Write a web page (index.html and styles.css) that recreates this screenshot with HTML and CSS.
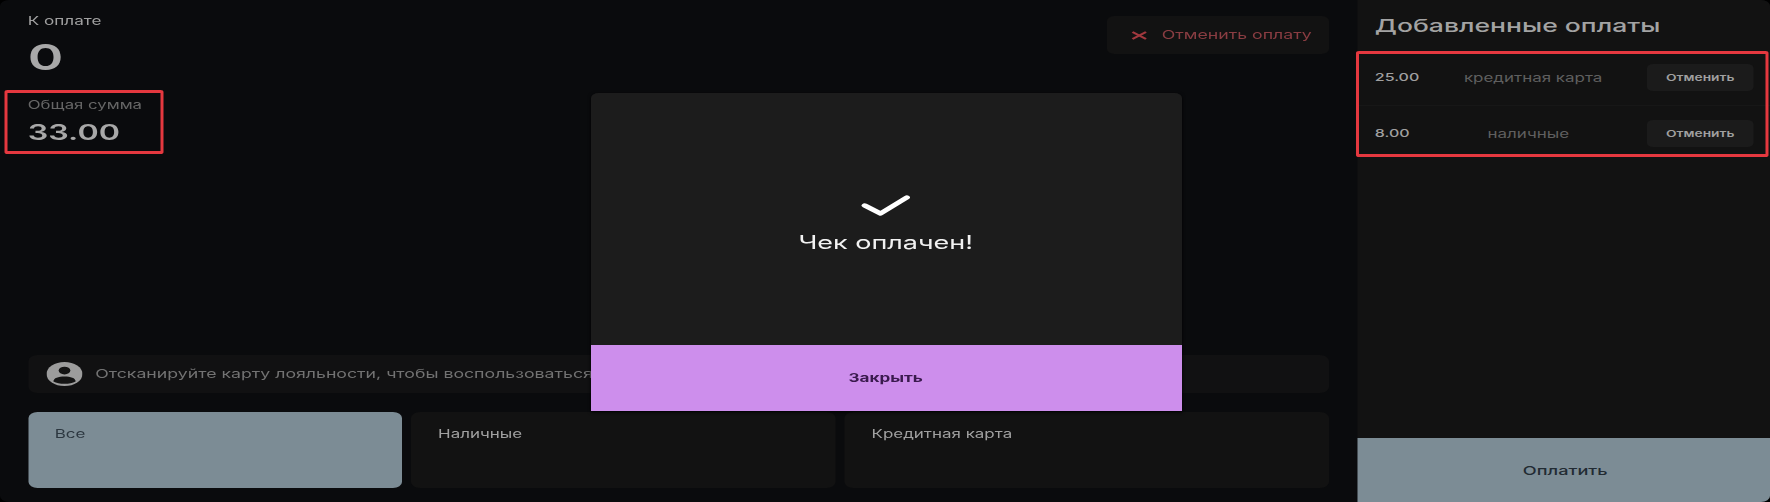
FILE: index.html
```html
<!DOCTYPE html>
<html lang="ru">
<head>
<meta charset="utf-8">
<title>Оплата</title>
<link rel="stylesheet" href="styles.css">
</head>
<body>
<div class="app">
  <main class="main">
    <header class="top">
      <div class="sums">
        <div class="label label-due">К оплате</div>
        <div class="due">0</div>
        <div class="total marked">
          <div class="label label-total">Общая сумма</div>
          <div class="total-value">33.00</div>
        </div>
      </div>
      <button class="cancel-all">
        <svg class="cancel-icon" viewBox="0 0 11 9" preserveAspectRatio="none"><path d="M1 1l9 7M10 1L1 8"/></svg>
        <span>Отменить оплату</span>
      </button>
    </header>
    <div class="loyalty">
      <svg class="avatar" viewBox="0 0 24 24"><circle class="avatar-bg" cx="12" cy="12" r="12"/><circle class="avatar-fg" cx="12" cy="8.6" r="3.9"/><path class="avatar-fg" d="M4.6 19.4c0-3.600 3.400-5 7.400-5s7.400 1.400 7.400 5c-1.900 1.500-4.500 2.400-7.400 2.400s-5.500-.9-7.400-2.400z"/></svg>
      <span>Отсканируйте карту лояльности, чтобы воспользоваться</span>
    </div>
    <div class="tiles">
      <div class="tile tile-active">Все</div>
      <div class="tile">Наличные</div>
      <div class="tile">Кредитная карта</div>
    </div>
  </main>
  <aside class="side">
    <h2 class="side-title">Добавленные оплаты</h2>
    <div class="payments marked">
      <div class="payment">
        <span class="amount">25.00</span>
        <span class="method">кредитная карта</span>
        <button class="undo">Отменить</button>
      </div>
      <div class="divider"></div>
      <div class="payment">
        <span class="amount">8.00</span>
        <span class="method">наличные</span>
        <button class="undo">Отменить</button>
      </div>
    </div>
    <button class="pay">Оплатить</button>
  </aside>
  <section class="modal">
    <div class="modal-body">
      <svg class="check" viewBox="0 0 33 21"><path d="M2.500 10.500l10.500 8 17.500-16"/></svg>
      <p class="modal-text">Чек оплачен!</p>
    </div>
    <button class="modal-close">Закрыть</button>
  </section>
</div>
</body>
</html>
```
FILE: styles.css
```css
*, *::after { box-sizing: border-box; }
html, body { margin: 0; height: 100%; background: #000; overflow: hidden; }
.app {
  position: relative;
  display: flex;
  width: 1180px;
  height: 502px;
  transform: scaleX(1.5);
  transform-origin: 0 0;
  background: #0a0b0d;
  border-radius: 6px;
  overflow: hidden;
  font-family: Inter, "Noto Sans", sans-serif;
  color: #a3a3a3;
  filter: blur(0.4px);
}
button { font: inherit; border: 0; padding: 0; }
.main {
  width: 905px;
  padding: 0 19px 14px 18.500px;
  display: flex;
  flex-direction: column;
}
.top { display: flex; justify-content: space-between; align-items: flex-start; flex: 1; }
.sums { padding-top: 14px; }
.label { line-height: 14px; }
.label-due { font-size: 11.400px; color: #a0a0a0; }
.due { font-size: 36px; font-weight: 600; line-height: 42px; margin-top: 8px; color: #a8a8a8; }
.total { position: relative; margin-top: 20px; }
.label-total { font-size: 11.200px; color: #666; }
.total-value { font-size: 21.500px; font-weight: 600; line-height: 26px; margin-top: 7px; color: #a8a8a8; }
.marked::after {
  content: "";
  position: absolute;
  border: 3px solid #e5383f;
  border-left-width: 2px;
  border-right-width: 2px;
  border-radius: 2px;
  pointer-events: none;
}
.total::after { left: -15.500px; top: -8.500px; bottom: -9px; width: 106px; }
.cancel-all {
  display: flex;
  align-items: center;
  gap: 10px;
  width: 148.500px;
  height: 38px;
  margin-top: 16px;
  padding-left: 16px;
  background: #121212;
  border-radius: 5px;
  color: #8a3d42;
  font-size: 11.800px;
}
.cancel-icon { width: 11px; height: 9px; fill: none; stroke: #a1383e; stroke-width: 1.700; }
.loyalty {
  display: flex;
  align-items: center;
  gap: 9px;
  height: 38px;
  padding-left: 12px;
  background: #111112;
  border-radius: 6px;
  color: #727272;
  font-size: 11.800px;
  white-space: nowrap;
}
.avatar { width: 24px; height: 24px; flex: none; }
.avatar-bg { fill: #9c9c9c; }
.avatar-fg { fill: #141414; }
.tiles {
  display: grid;
  grid-template-columns: 374fr 424fr 484fr;
  gap: 6px;
  height: 76px;
  margin-top: 19px;
}
.tile {
  padding: 15px 18px;
  background: #121212;
  border-radius: 6px;
  font-size: 11.300px;
  color: #a0a0a0;
}
.tile-active { background: #7c8c95; color: #2c3740; }
.side {
  position: relative;
  width: 275px;
  background: #121212;
  display: flex;
  flex-direction: column;
}
.side-title {
  margin: 0;
  height: 51px;
  padding: 16px 11.500px 0;
  font-size: 17.700px;
  line-height: 20px;
  font-weight: 500;
  color: #a3a3a3;
}
.payments {
  position: relative;
  flex: 1;
  padding-top: 13px;
}
.payments::after { left: -1px; top: 0; width: 275px; height: 106px; }
.payment {
  display: flex;
  align-items: center;
  justify-content: space-between;
  height: 27px;
  margin: 0 11px 0 11.500px;
  font-size: 11.300px;
}
.divider { height: 1px; margin: 14px 0; background: #171717; }
.amount { color: #a0a0a0; font-size: 10.700px; font-weight: 500; }
.method { color: #5f5f5f; }
.undo {
  width: 71px;
  height: 27px;
  background: #1b1b1b;
  border-radius: 4px;
  color: #a0a0a0;
  font-size: 9.200px;
  font-weight: 600;
}
.pay {
  height: 64.500px;
  padding: 1px 0 0 2px;
  background: #7c8c95;
  color: #222b33;
  font-size: 12.100px;
  font-weight: 500;
}
.modal {
  position: absolute;
  left: 393.500px;
  top: 93px;
  width: 394px;
  height: 318px;
  display: flex;
  flex-direction: column;
  background: #1c1c1c;
  border-radius: 5px 5px 0 0;
  box-shadow: 0 1px 3px #000;
  overflow: hidden;
}
.modal-body { flex: 1; display: flex; flex-direction: column; align-items: center; padding-top: 102px; }
.check { width: 33px; height: 21px; fill: none; stroke: #fff; stroke-width: 4.200; stroke-linecap: round; stroke-linejoin: round; }
.modal-text { margin: 16px 0 0; font-size: 18px; line-height: 22px; color: #f2f2f2; }
.modal-close {
  height: 66px;
  background: #cd8eec;
  color: #3a1a4e;
  font-size: 11.400px;
  font-weight: 700;
}
```
